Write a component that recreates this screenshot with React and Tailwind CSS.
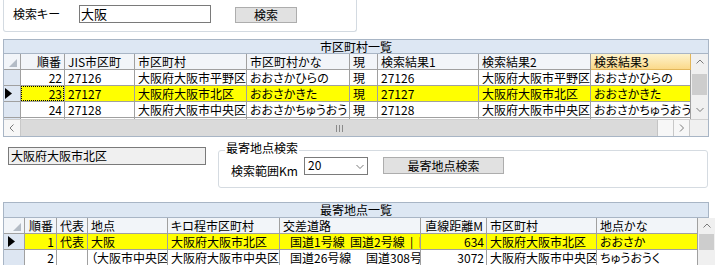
import React from 'react';

const cols1 = [
  { k: '順番', w: 'w-[44px]', right: true },
  { k: 'JIS市区町', w: 'w-[70px]' },
  { k: '市区町村', w: 'w-[112px]' },
  { k: '市区町村かな', w: 'w-[103px]' },
  { k: '現', w: 'w-[28px]' },
  { k: '検索結果1', w: 'w-[101px]' },
  { k: '検索結果2', w: 'w-[112px]' },
  { k: '検索結果3', w: 'w-[100px]', hl: true },
];

const rows1 = [
  { c: ['22', '27126', '大阪府大阪市平野区', 'おおさかひらの', '現', '27126', '大阪府大阪市平野区', 'おおさかひらの'] },
  { c: ['23', '27127', '大阪府大阪市北区', 'おおさかきた', '現', '27127', '大阪府大阪市北区', 'おおさかきた'], sel: true },
  { c: ['24', '27128', '大阪府大阪市中央区', 'おおさかちゅうおう', '現', '27128', '大阪府大阪市中央区', 'おおさかちゅうおう'] },
  { c: ['25', '27140', '大阪府堺市', 'さかいし', '現', '27140', '大阪府堺市', 'さかいし'] },
];

const cols2 = [
  { k: '順番', w: 'w-[32px]', right: true },
  { k: '代表', w: 'w-[31px]' },
  { k: '地点', w: 'w-[80px]' },
  { k: 'キロ程市区町村', w: 'w-[112px]' },
  { k: '交差道路', w: 'w-[141px]', pad: 'pl-[10px]' },
  { k: '直線距離M', w: 'w-[66px]', right: true },
  { k: '市区町村', w: 'w-[110px]' },
  { k: '地点かな', w: 'w-[101px]' },
];

const rows2 = [
  { c: ['1', '代表', '大阪', '大阪府大阪市北区', '国道1号線  国道2号線  |  国道', '634', '大阪府大阪市北区', 'おおさか'], sel: true },
  { c: ['2', '', '（大阪市中央区', '大阪府大阪市中央区', '国道26号線　 国道308号線', '3072', '大阪府大阪市中央区', 'ちゅうおうく'] },
];

function Chevron({ dir }) {
  const pts = {
    up: '0.5,4.5 4,1 7.5,4.5',
    down: '0.5,1 4,4.5 7.5,1',
    left: '4.5,0.5 1,4 4.5,7.5',
    right: '1,0.5 4.5,4 1,7.5',
  }[dir];
  const w = dir === 'up' || dir === 'down' ? 8 : 6;
  const h = dir === 'up' || dir === 'down' ? 6 : 8;
  return (
    <svg width={w} height={h} viewBox={`0 0 ${w} ${h}`}>
      <polyline points={pts} fill="none" stroke="#7a7a7a" strokeWidth="1" />
    </svg>
  );
}

function Corner() {
  return (
    <svg width="8" height="8" viewBox="0 0 8 8">
      <polygon points="8,0 8,8 0,8" fill="#b4bcc6" />
    </svg>
  );
}

function Arrow() {
  return (
    <svg width="7" height="11" viewBox="0 0 7 11">
      <polygon points="0,0 7,5.5 0,11" fill="#000" />
    </svg>
  );
}

function HeaderRow({ cols, rhw }) {
  return (
    <div className="flex h-[16px]">
      <div className={`${rhw} shrink-0 h-full border-r border-b border-[#a0a0a0] bg-[#f2f5f9] flex items-end justify-end pr-[3px] pb-[2px]`}>
        <Corner />
      </div>
      {cols.map((c, i) => (
        <div
          key={i}
          className={`${c.w} shrink-0 h-full border-r border-b overflow-hidden whitespace-pre leading-[15px] ${c.right ? 'text-right pr-[3px]' : 'pl-[3px]'} ${c.hl ? 'bg-linear-to-b from-[#fdf3cc] to-[#fbd98a] border-[#e2b65a]' : 'bg-[#f2f5f9] border-[#a0a0a0]'}`}
        >
          {c.k}
        </div>
      ))}
    </div>
  );
}

function DataRow({ cols, row, rhw, arrowPad, focusFirst }) {
  return (
    <div className="flex h-[16px]">
      <div className={`${rhw} ${arrowPad} shrink-0 h-full border-r border-b border-[#a0a0a0] bg-[#dde6f2] flex items-center`}>
        {row.sel && <Arrow />}
      </div>
      {cols.map((c, i) => (
        <div
          key={i}
          className={`${c.w} shrink-0 h-full relative border-r border-b border-[#a0a0a0] overflow-hidden whitespace-pre leading-[15px] ${c.right ? 'text-right pr-[2px]' : c.pad || 'pl-[3px]'} ${row.sel ? 'bg-[#ffff00]' : 'bg-white'}`}
        >
          {row.c[i]}
          {row.sel && focusFirst && i === 0 && (
            <div className="absolute inset-0 border border-dotted border-black" />
          )}
        </div>
      ))}
    </div>
  );
}

function TopPanel() {
  return (
    <div className="ml-[3px] w-[354px] h-[32px] border border-t-0 border-[#d3dae1] rounded-b-[3px] flex items-start">
      <div className="ml-[9px] mt-[6px] w-[66px] leading-[16px]">検索キー</div>
      <div className="mt-[5px] w-[132px] h-[18px] border border-[#7a7a7a] bg-white pl-[1px] leading-[16px] text-[13px]">大阪</div>
      <div className="ml-[24px] mt-[7px] w-[62px] h-[16px] border border-[#adadad] bg-[#e1e1e1] text-center leading-[14px]">検索</div>
    </div>
  );
}

function Grid1() {
  return (
    <div className="ml-[3px] mt-[7px] w-[706px] border border-[#a8b5c5] bg-white">
      <div className="h-[14px] leading-[14px] text-center bg-[#dde7f3] border-b border-[#a8b5c5]">市区町村一覧</div>
      <div className="flex">
        <div className="w-[687px]">
          <HeaderRow cols={cols1} rhw="w-[17px]" />
          <div className="h-[49px] overflow-hidden">
            {rows1.map((r, i) => (
              <DataRow key={i} cols={cols1} row={r} rhw="w-[17px]" arrowPad="pl-[1px]" focusFirst />
            ))}
          </div>
        </div>
        <div className="w-[17px] h-[65px] flex flex-col bg-[#f0f0f0]">
          <div className="h-[16px] flex items-center justify-center bg-[#f0f0f0]">
            <Chevron dir="up" />
          </div>
          <div className="h-[4px]" />
          <div className="h-[21px] mx-[1px] bg-[#cdcdcd]" />
          <div className="h-[7px]" />
          <div className="h-[16px] flex items-center justify-center">
            <Chevron dir="down" />
          </div>
        </div>
      </div>
      <div className="flex h-[17px] border-t border-[#d0d0d0] bg-[#f0f0f0]">
        <div className="w-[17px] h-full flex items-center justify-center border-r border-[#c8c8c8] bg-[#f7f7f7]">
          <Chevron dir="left" />
        </div>
        <div className="w-[637px] h-full bg-[#dadada] border-r border-[#c4c4c4] flex items-center justify-center">
          <div className="flex gap-[2px] h-[7px] mt-[1px]">
            <div className="w-[1px] bg-[#8a8a8a]" />
            <div className="w-[1px] bg-[#8a8a8a]" />
            <div className="w-[1px] bg-[#8a8a8a]" />
          </div>
        </div>
        <div className="w-[15px] h-full bg-[#f7f7f7]" />
        <div className="w-[17px] h-full flex items-center justify-center border-l border-r border-[#c8c8c8] bg-[#f7f7f7]">
          <Chevron dir="right" />
        </div>
        <div className="w-[17px] h-full bg-[#f0f0f0]" />
      </div>
    </div>
  );
}

function Middle() {
  return (
    <div className="h-[65px] flex items-start">
      <div className="ml-[8px] mt-[10px] w-[198px] h-[18px] border border-[#7a7a7a] bg-[#f0f0f0] pl-[2px] leading-[16px]">大阪府大阪市北区</div>
      <div className="relative ml-[12px] mt-[13px] w-[490px] h-[38px] border border-[#d5dbe1] rounded-[3px]">
        <span className="absolute left-[6px] top-[-11px] bg-white px-[1px] leading-[16px]">最寄地点検索</span>
        <div className="flex items-start pl-[12px] pt-[6px]">
          <span className="mt-[6px] w-[73px] leading-[16px]">検索範囲Km</span>
          <div className="w-[64px] h-[18px] border border-[#7a7a7a] bg-white flex items-start justify-between">
            <span className="pl-[3px] leading-[13px]">20</span>
            <span className="mr-[3px] mt-[6px]">
              <Chevron dir="down" />
            </span>
          </div>
          <div className="ml-[15px] w-[121px] h-[17px] border border-[#adadad] bg-[#e1e1e1] text-center leading-[15px]">最寄地点検索</div>
        </div>
      </div>
    </div>
  );
}

function Grid2() {
  return (
    <div className="ml-[3px] w-[713px]">
      <div className="w-[706px] h-[16px] border border-b border-[#a8b5c5] bg-[#dde7f3] text-center leading-[14px]">最寄地点一覧</div>
      <div className="flex border-l border-[#a8b5c5] bg-white">
        <div className="w-[694px]">
          <HeaderRow cols={cols2} rhw="w-[21px]" />
          {rows2.map((r, i) => (
            <DataRow key={i} cols={cols2} row={r} rhw="w-[21px]" arrowPad="pl-[4px]" />
          ))}
        </div>
        <div className="w-[17px] flex flex-col bg-[#f0f0f0]">
          <div className="h-[16px] flex items-center justify-center">
            <Chevron dir="up" />
          </div>
          <div className="h-[16px] mx-[1px] bg-[#cdcdcd]" />
          <div className="flex-1" />
        </div>
      </div>
    </div>
  );
}

export default function App() {
  return (
    <div className="w-[716px] h-[265px] overflow-hidden bg-white text-[12px] text-black font-['Noto_Sans_CJK_JP','Noto_Sans',sans-serif] [font-feature-settings:'palt']">
      <TopPanel />
      <Grid1 />
      <Middle />
      <Grid2 />
    </div>
  );
}
